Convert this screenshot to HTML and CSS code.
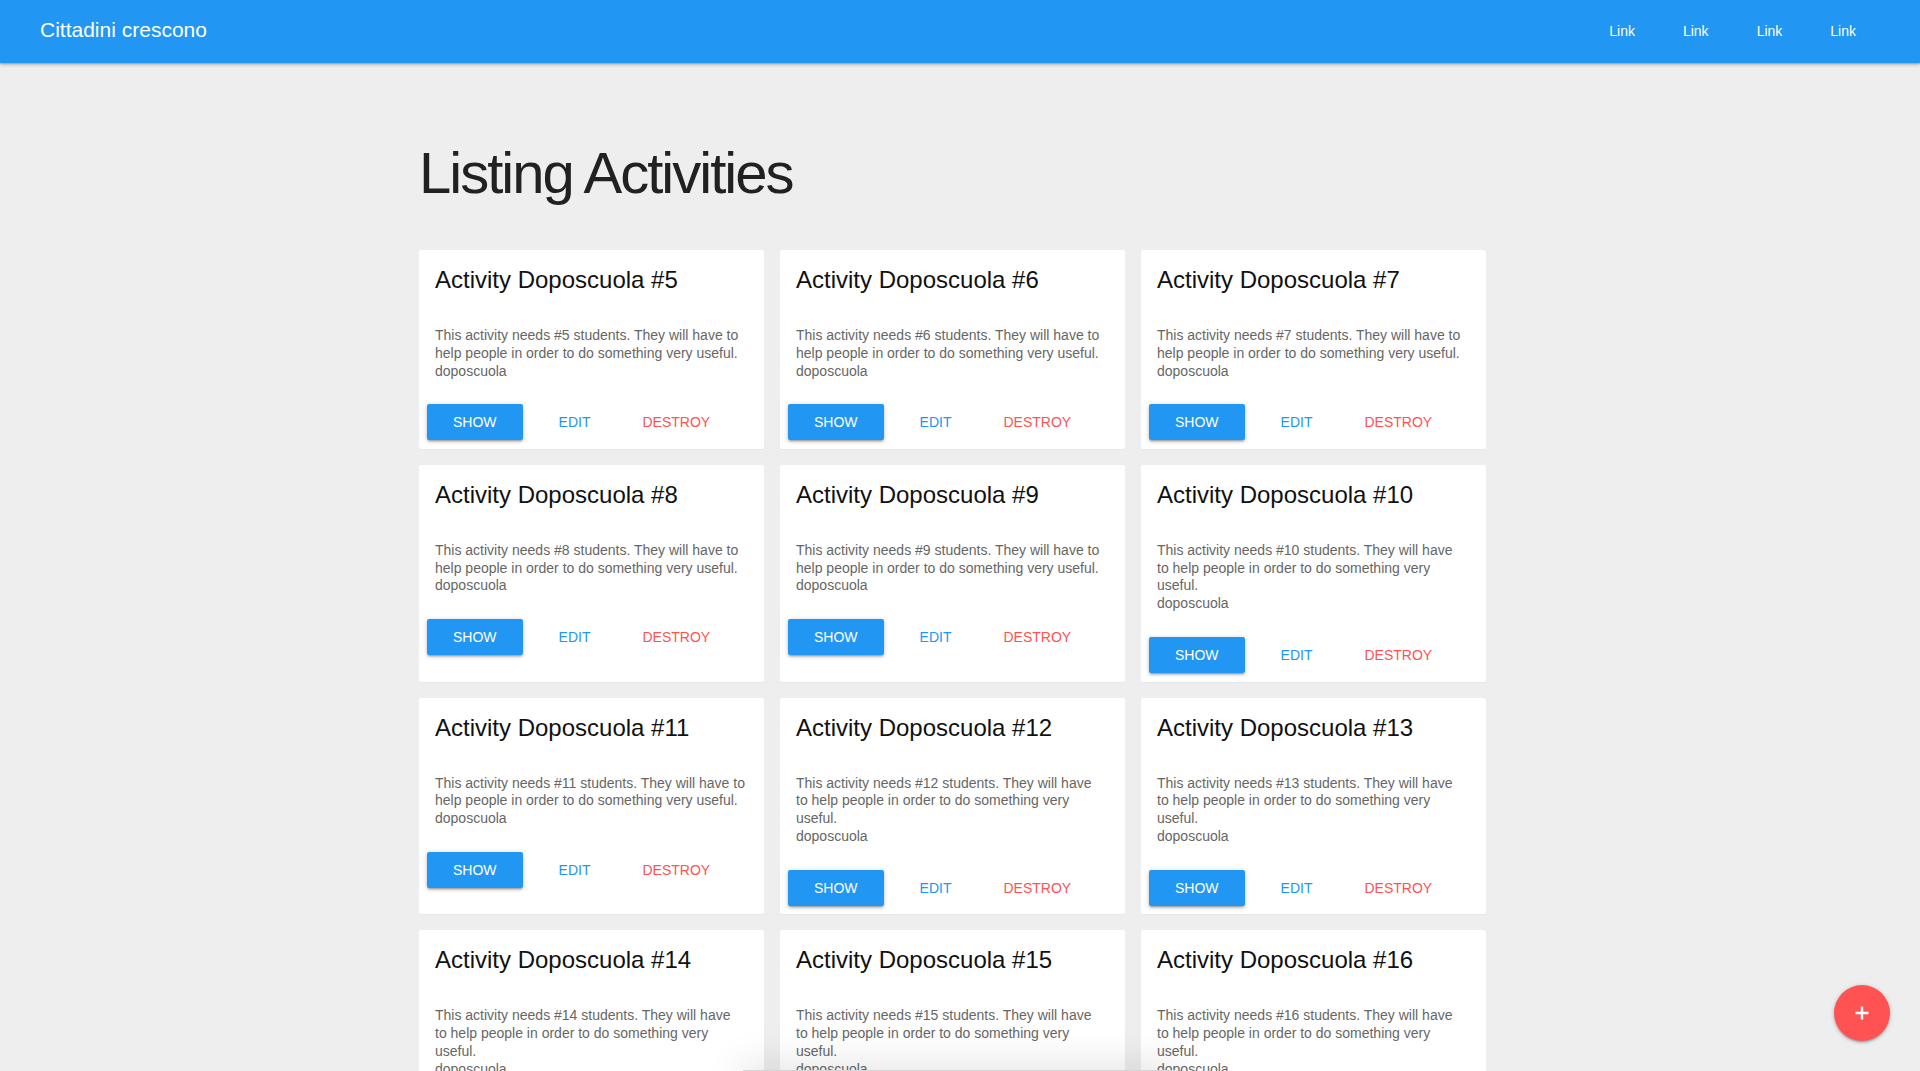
FILE: index.html
```html
<!DOCTYPE html>
<html lang="it">
<head>
<meta charset="utf-8">
<title>Cittadini crescono</title>
<link rel="stylesheet" href="styles.css">
</head>
<body>
<nav class="navbar">
  <a class="brand" href="#">Cittadini crescono</a>
  <ul class="nav-links">
    <li><a href="#">Link</a></li>
    <li><a href="#">Link</a></li>
    <li><a href="#">Link</a></li>
    <li><a href="#">Link</a></li>
  </ul>
</nav>

<main class="container">
  <h1 class="page-title">Listing Activities</h1>
  <div class="grid">
    <div class="card"><div class="card-content"><h2 class="card-title">Activity Doposcuola #5</h2><p class="card-text">This activity needs #5 students. They will have to help people in order to do something very useful.<br>doposcuola</p></div><div class="card-action"><a class="btn" href="#">Show</a><a class="btn-flat edit" href="#">Edit</a><a class="btn-flat destroy" href="#">Destroy</a></div></div>
    <div class="card"><div class="card-content"><h2 class="card-title">Activity Doposcuola #6</h2><p class="card-text">This activity needs #6 students. They will have to help people in order to do something very useful.<br>doposcuola</p></div><div class="card-action"><a class="btn" href="#">Show</a><a class="btn-flat edit" href="#">Edit</a><a class="btn-flat destroy" href="#">Destroy</a></div></div>
    <div class="card"><div class="card-content"><h2 class="card-title">Activity Doposcuola #7</h2><p class="card-text">This activity needs #7 students. They will have to help people in order to do something very useful.<br>doposcuola</p></div><div class="card-action"><a class="btn" href="#">Show</a><a class="btn-flat edit" href="#">Edit</a><a class="btn-flat destroy" href="#">Destroy</a></div></div>
    <div class="card"><div class="card-content"><h2 class="card-title">Activity Doposcuola #8</h2><p class="card-text">This activity needs #8 students. They will have to help people in order to do something very useful.<br>doposcuola</p></div><div class="card-action"><a class="btn" href="#">Show</a><a class="btn-flat edit" href="#">Edit</a><a class="btn-flat destroy" href="#">Destroy</a></div></div>
    <div class="card"><div class="card-content"><h2 class="card-title">Activity Doposcuola #9</h2><p class="card-text">This activity needs #9 students. They will have to help people in order to do something very useful.<br>doposcuola</p></div><div class="card-action"><a class="btn" href="#">Show</a><a class="btn-flat edit" href="#">Edit</a><a class="btn-flat destroy" href="#">Destroy</a></div></div>
    <div class="card"><div class="card-content"><h2 class="card-title">Activity Doposcuola #10</h2><p class="card-text">This activity needs #10 students. They will have to help people in order to do something very useful.<br>doposcuola</p></div><div class="card-action"><a class="btn" href="#">Show</a><a class="btn-flat edit" href="#">Edit</a><a class="btn-flat destroy" href="#">Destroy</a></div></div>
    <div class="card"><div class="card-content"><h2 class="card-title">Activity Doposcuola #11</h2><p class="card-text">This activity needs #11 students. They will have to help people in order to do something very useful.<br>doposcuola</p></div><div class="card-action"><a class="btn" href="#">Show</a><a class="btn-flat edit" href="#">Edit</a><a class="btn-flat destroy" href="#">Destroy</a></div></div>
    <div class="card"><div class="card-content"><h2 class="card-title">Activity Doposcuola #12</h2><p class="card-text">This activity needs #12 students. They will have to help people in order to do something very useful.<br>doposcuola</p></div><div class="card-action"><a class="btn" href="#">Show</a><a class="btn-flat edit" href="#">Edit</a><a class="btn-flat destroy" href="#">Destroy</a></div></div>
    <div class="card"><div class="card-content"><h2 class="card-title">Activity Doposcuola #13</h2><p class="card-text">This activity needs #13 students. They will have to help people in order to do something very useful.<br>doposcuola</p></div><div class="card-action"><a class="btn" href="#">Show</a><a class="btn-flat edit" href="#">Edit</a><a class="btn-flat destroy" href="#">Destroy</a></div></div>
    <div class="card"><div class="card-content"><h2 class="card-title">Activity Doposcuola #14</h2><p class="card-text">This activity needs #14 students. They will have to help people in order to do something very useful.<br>doposcuola</p></div><div class="card-action"><a class="btn" href="#">Show</a><a class="btn-flat edit" href="#">Edit</a><a class="btn-flat destroy" href="#">Destroy</a></div></div>
    <div class="card"><div class="card-content"><h2 class="card-title">Activity Doposcuola #15</h2><p class="card-text">This activity needs #15 students. They will have to help people in order to do something very useful.<br>doposcuola</p></div><div class="card-action"><a class="btn" href="#">Show</a><a class="btn-flat edit" href="#">Edit</a><a class="btn-flat destroy" href="#">Destroy</a></div></div>
    <div class="card"><div class="card-content"><h2 class="card-title">Activity Doposcuola #16</h2><p class="card-text">This activity needs #16 students. They will have to help people in order to do something very useful.<br>doposcuola</p></div><div class="card-action"><a class="btn" href="#">Show</a><a class="btn-flat edit" href="#">Edit</a><a class="btn-flat destroy" href="#">Destroy</a></div></div>
  </div>
</main>

<a class="fab" href="#" aria-label="Add">
  <svg width="16" height="16" viewBox="0 0 16 16"><path d="M8 1.5v13M1.5 8h13" stroke="#fff" stroke-width="2.4" fill="none"/></svg>
</a>

<div class="bottom-sheet"></div>
</body>
</html>
```

FILE: styles.css
```css
* { box-sizing: border-box; }

html, body {
  margin: 0;
  padding: 0;
}

body {
  background: #eeeeee;
  font-family: "Liberation Sans", Arial, Helvetica, sans-serif;
  color: #212121;
}

a { text-decoration: none; }

.navbar {
  height: 63px;
  background: #2196f3;
  display: flex;
  align-items: center;
  justify-content: space-between;
  padding: 0 40px;
  box-shadow: 0 2px 3px rgba(0, 0, 0, 0.22), 0 1px 1px rgba(0, 0, 0, 0.1);
  position: relative;
  z-index: 2;
}

.brand {
  color: #fff;
  font-size: 21px;
  padding-bottom: 3px;
}

.nav-links {
  list-style: none;
  margin: 0;
  padding: 0;
  display: flex;
}

.nav-links a {
  display: block;
  color: #fff;
  font-size: 14px;
  line-height: 63px;
  padding: 0 24px;
}

.container {
  width: 1082px;
  margin: 0 auto;
}

.page-title {
  font-size: 58px;
  line-height: 58px;
  font-weight: 400;
  letter-spacing: -2px;
  color: #212121;
  margin: 81px 0 48px;
}

.grid {
  display: grid;
  grid-template-columns: repeat(3, 345px);
  gap: 16px;
  padding-bottom: 40px;
}

.card {
  background: #fff;
  border-radius: 2px;
  box-shadow: 0 1px 1px rgba(0, 0, 0, 0.03);
}

.card-content {
  padding: 17px 18.8px 0 16px;
}

.card-title {
  margin: 0 0 34px;
  font-size: 24px;
  line-height: 26px;
  font-weight: 400;
  color: #111;
}

.card-text {
  margin: 0;
  font-size: 14px;
  line-height: 17.8px;
  color: #666;
}

.card-action {
  display: flex;
  align-items: center;
  padding: 24px 8px 8.5px;
}

.btn,
.btn-flat {
  display: block;
  height: 36px;
  line-height: 36px;
  padding: 0 26px;
  font-size: 14px;
  text-transform: uppercase;
  border-radius: 2px;
}

.btn {
  background: #2196f3;
  color: #fff;
  margin-right: 10px;
  box-shadow: 0 2px 2px 0 rgba(0, 0, 0, 0.14), 0 3px 1px -2px rgba(0, 0, 0, 0.12), 0 1px 5px 0 rgba(0, 0, 0, 0.2);
}

.edit { color: #2196f3; }
.destroy { color: #ff5252; }

.fab {
  position: fixed;
  right: 30px;
  bottom: 30px;
  width: 56px;
  height: 56px;
  border-radius: 50%;
  background: #ff5252;
  display: flex;
  align-items: center;
  justify-content: center;
  box-shadow: 0 2px 2px 0 rgba(0, 0, 0, 0.14), 0 3px 1px -2px rgba(0, 0, 0, 0.12), 0 1px 5px 0 rgba(0, 0, 0, 0.2);
  z-index: 5;
}

.bottom-sheet {
  position: fixed;
  left: 743px;
  width: 434px;
  bottom: -40px;
  height: 41px;
  background: #f2f2f2;
  border-top: 1px solid #d6d6d6;
  box-shadow: 0 -4px 40px rgba(0, 0, 0, 0.12);
  z-index: 4;
}
```
